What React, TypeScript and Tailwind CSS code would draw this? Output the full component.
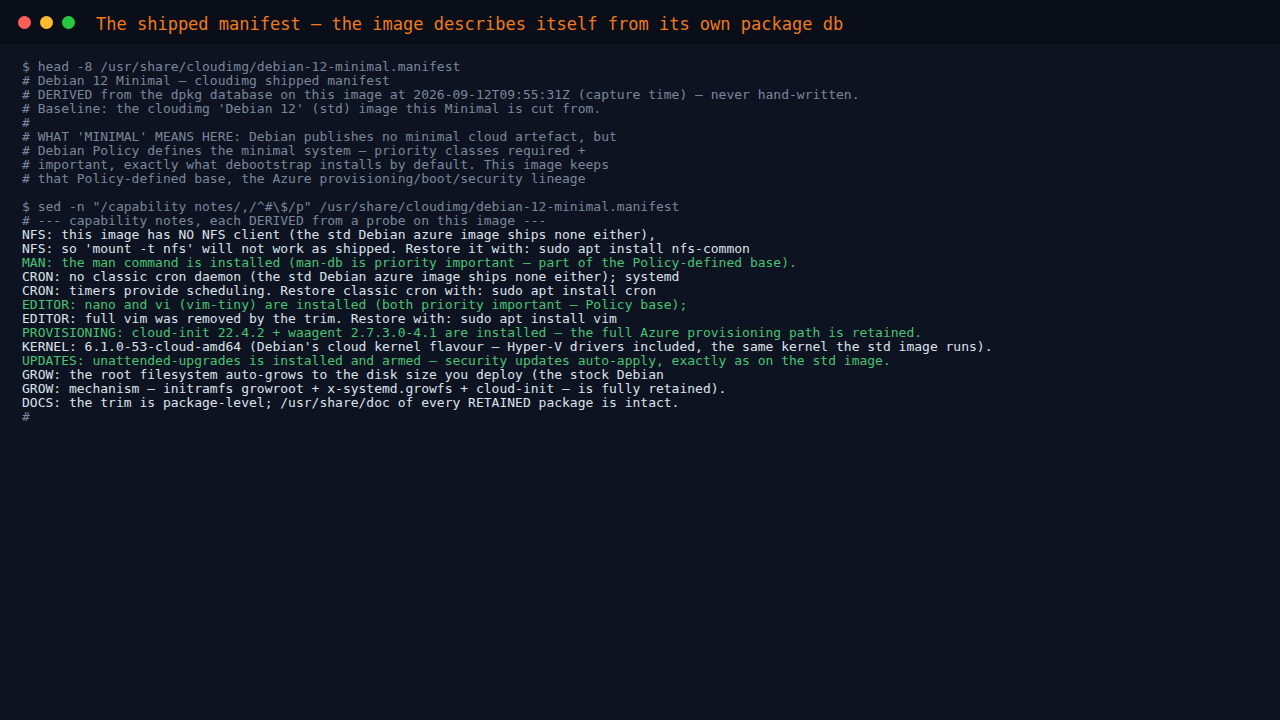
import React from "react";

type Tone = "dim" | "plain" | "ok";

const MONO = "font-['DejaVu_Sans_Mono','Liberation_Mono',monospace]";

// ─── manifest text ────────────────────────────────────────────────────

const HEAD: string[] = [
  "$ head -8 /usr/share/cloudimg/debian-12-minimal.manifest",
  "# Debian 12 Minimal — cloudimg shipped manifest",
  "# DERIVED from the dpkg database on this image at 2026-09-12T09:55:31Z (capture time) — never hand-written.",
  "# Baseline: the cloudimg 'Debian 12' (std) image this Minimal is cut from.",
  "#",
  "# WHAT 'MINIMAL' MEANS HERE: Debian publishes no minimal cloud artefact, but",
  "# Debian Policy defines the minimal system — priority classes required +",
  "# important, exactly what debootstrap installs by default. This image keeps",
  "# that Policy-defined base, the Azure provisioning/boot/security lineage",
];

const NOTES: [Tone, string][] = [
  ["dim", '$ sed -n "/capability notes/,/^#\\$/p" /usr/share/cloudimg/debian-12-minimal.manifest'],
  ["dim", "# --- capability notes, each DERIVED from a probe on this image ---"],
  ["plain", "NFS: this image has NO NFS client (the std Debian azure image ships none either),"],
  ["plain", "NFS: so 'mount -t nfs' will not work as shipped. Restore it with: sudo apt install nfs-common"],
  ["ok", "MAN: the man command is installed (man-db is priority important — part of the Policy-defined base)."],
  ["plain", "CRON: no classic cron daemon (the std Debian azure image ships none either); systemd"],
  ["plain", "CRON: timers provide scheduling. Restore classic cron with: sudo apt install cron"],
  ["ok", "EDITOR: nano and vi (vim-tiny) are installed (both priority important — Policy base);"],
  ["plain", "EDITOR: full vim was removed by the trim. Restore with: sudo apt install vim"],
  ["ok", "PROVISIONING: cloud-init 22.4.2 + waagent 2.7.3.0-4.1 are installed — the full Azure provisioning path is retained."],
  ["plain", "KERNEL: 6.1.0-53-cloud-amd64 (Debian's cloud kernel flavour — Hyper-V drivers included, the same kernel the std image runs)."],
  ["ok", "UPDATES: unattended-upgrades is installed and armed — security updates auto-apply, exactly as on the std image."],
  ["plain", "GROW: the root filesystem auto-grows to the disk size you deploy (the stock Debian"],
  ["plain", "GROW: mechanism — initramfs growroot + x-systemd.growfs + cloud-init — is fully retained)."],
  ["plain", "DOCS: the trim is package-level; /usr/share/doc of every RETAINED package is intact."],
  ["dim", "#"],
];

const TONE: Record<Tone, string> = {
  dim: "text-[#7c879b]",
  plain: "text-[#dde3ec]",
  ok: "text-[#48c474]",
};

function Line({ tone, text }: { tone: Tone; text: string }) {
  return <div className={`${TONE[tone]} whitespace-pre h-[14px]`}>{text}</div>;
}

export default function App() {
  return (
    <div className="w-full min-h-[720px] bg-[#0d1320] flex flex-col">
      {/* ── title bar ── */}
      <div className="h-[44px] bg-[#0a0e18] flex items-center px-[18px] pt-[1px] shrink-0">
        <div className="flex items-center gap-[9px]">
          <span className="w-[13px] h-[13px] rounded-full bg-[#ff5f57]" />
          <span className="w-[13px] h-[13px] rounded-full bg-[#febc2e]" />
          <span className="w-[13px] h-[13px] rounded-full bg-[#28c840]" />
        </div>
        <span className={`${MONO} ml-[21px] pt-[3px] text-[17px] text-[#f07a1c] leading-none`}>
          The shipped manifest — the image describes itself from its own package db
        </span>
      </div>

      {/* ── terminal body ── */}
      <div className={`${MONO} text-[13px] leading-[14px] px-[22px] pt-[16px] flex flex-col`}>
        {HEAD.map((t, i) => (
          <Line key={`h${i}`} tone="dim" text={t} />
        ))}
        <div className="h-[14px]" />
        {NOTES.map(([tone, t], i) => (
          <Line key={`n${i}`} tone={tone} text={t} />
        ))}
      </div>
    </div>
  );
}
